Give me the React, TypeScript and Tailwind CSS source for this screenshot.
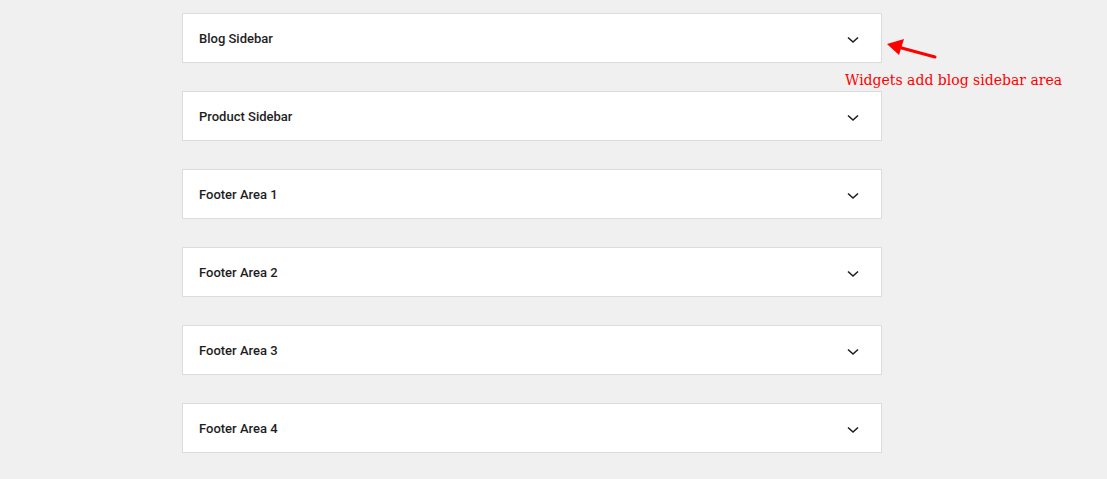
import React from "react";

const items = ["Blog Sidebar", "Product Sidebar", "Footer Area 1", "Footer Area 2", "Footer Area 3", "Footer Area 4"];

function Chevron() {
  return (
    <svg className="mt-[4px]" width="12" height="8" viewBox="0 0 12 8" fill="none">
      <path d="M1 1.5 L6 6 L11 1.5" stroke="#1e1e1e" strokeWidth="1.6" />
    </svg>
  );
}

export default function App() {
  return (
    <div className="relative w-[1107px] h-[479px] bg-[#f0f0f0] overflow-hidden" style={{ fontFamily: "Roboto, sans-serif" }}>
      <div className="flex flex-col gap-[28px] pl-[182px] pt-[13px]">
        {items.map((t) => (
          <div key={t} className="w-[700px] h-[50px] bg-white border border-[#dcdcde] flex items-center justify-between pl-[16px] pr-[22px]">
            <span className="text-[13px] font-medium text-[#1e1e1e] mt-[2px]">{t}</span>
            <Chevron />
          </div>
        ))}
      </div>
      <svg className="absolute left-[884px] top-[36px]" width="56" height="26" viewBox="0 0 56 26">
        <line x1="51" y1="21" x2="14" y2="11" stroke="#ff0000" strokeWidth="3" strokeLinecap="round" />
        <polygon points="3,8 20,3 15,19" fill="#ff0000" />
      </svg>
      <div className="absolute left-[845px] top-[70px] text-[14px] text-[#ff0000] whitespace-nowrap" style={{ fontFamily: "'DejaVu Serif', serif" }}>
        Widgets add blog sidebar area
      </div>
    </div>
  );
}
